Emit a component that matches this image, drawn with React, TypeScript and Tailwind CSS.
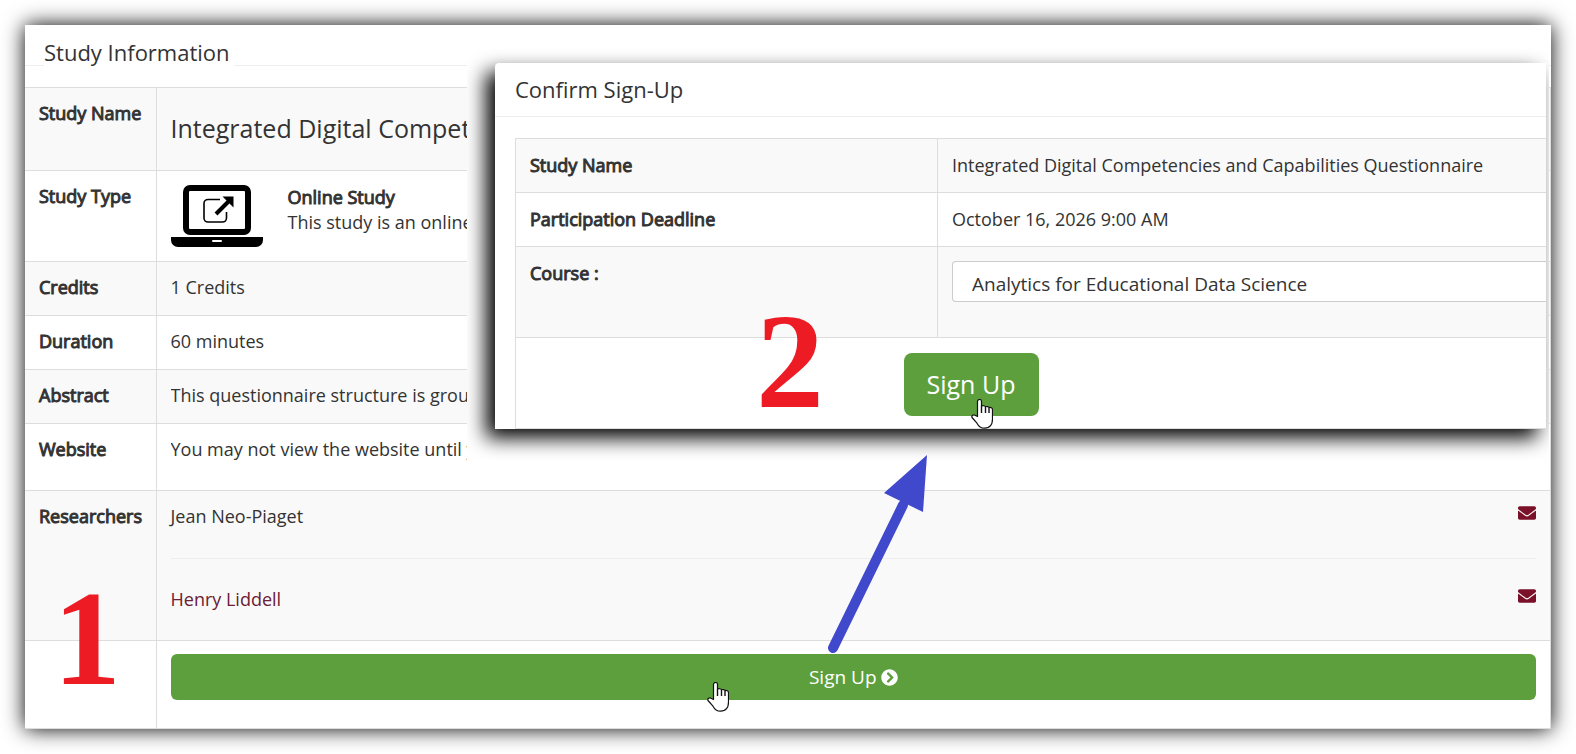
import type { ReactNode } from 'react';
import { FaEnvelope, FaChevronCircleRight } from 'react-icons/fa';

const COURSES = ['Analytics for Educational Data Science'];

const RESEARCHERS = [
  { name: 'Jean Neo-Piaget', link: false },
  { name: 'Henry Liddell', link: true },
];

function LaptopIcon() {
  return (
    <svg viewBox="0 0 92 62" className="w-[92px] h-[62px] shrink-0" aria-hidden="true">
      <rect x="15" y="3" width="62" height="44" rx="4" fill="none" stroke="#000" strokeWidth="6" />
      <path d="M0 52h92v3a7 7 0 0 1-7 7H7a7 7 0 0 1-7-7z" fill="#000" />
      <rect x="41" y="55" width="10" height="2" rx="1" fill="#fff" />
      <path d="M49 14.500H37a4 4 0 0 0-4 4V33a4 4 0 0 0 4 4h14.500a4 4 0 0 0 4-4v-6" fill="none" stroke="#000" strokeWidth="1.600" />
      <path d="M45 29L59 15" stroke="#000" strokeWidth="4" />
      <path d="M51.500 11.500H62.500V22.500z" fill="#000" />
    </svg>
  );
}

function HandCursor({ className }: { className: string }) {
  return (
    <svg viewBox="0 0 22 30" className={`absolute w-[22px] h-[30px] pointer-events-none ${className}`} aria-hidden="true">
      <path
        d="M6.500 17.500V2.500a2 2 0 0 1 4 0v4.500c1-.6 3.500-.3 4 .8 1-.6 3-.2 3.500.8 1.500-.5 3.500.3 3.500 2.200V20c0 5.500-2.500 9.200-8 9.200-4 0-6-2-7.500-5L1 18.500c-.8-2 1.500-3.200 3-2.300z"
        fill="#fff"
        stroke="#111"
        strokeWidth="1.200"
        strokeLinejoin="round"
      />
      <path d="M10.500 7v7M14.500 8v6M18 9v5" stroke="#111" strokeWidth="1.400" fill="none" />
    </svg>
  );
}

function StepNumber({ className, children }: { className: string; children: ReactNode }) {
  return (
    <span className={`absolute font-['Liberation_Serif',serif] text-[136px] leading-[136px] font-bold text-[#ed1c24] ${className}`}>{children}</span>
  );
}

function InfoRow({ label, shaded, className = '', children }: { label: string; shaded?: boolean; className?: string; children: ReactNode }) {
  return (
    <tr className={`border-t border-[#ddd] ${shaded ? 'bg-[#f9f9f9]' : 'bg-white'} ${className}`}>
      <th scope="row" className="w-[131px] px-3.5 py-[13px] text-left align-top font-normal [-webkit-text-stroke:1px] whitespace-nowrap border-r border-[#ddd]">{label}</th>
      <td className="px-3.5 py-[13px] align-top whitespace-nowrap">{children}</td>
    </tr>
  );
}

// Keeps long values inside the strip left of the confirmation panel
function Clipped({ children }: { children: ReactNode }) {
  return <div className="max-w-[296px] overflow-hidden">{children}</div>;
}

function StudyInformation() {
  return (
    <section>
      <div className="h-[41px] px-[19px] pt-3 border-b border-[#eee]">
        <h2 className="relative w-fit bg-white pr-1 text-[22px] leading-[30px]">Study Information</h2>
      </div>
      <table className="mt-[21px] w-full table-fixed border-collapse border-b border-r border-[#ddd]">
        <tbody>
          <InfoRow label="Study Name" shaded className="h-[83px]">
            <Clipped>
              <h3 className="pt-2.5 text-[25px] leading-[34px]">Integrated Digital Competencies</h3>
            </Clipped>
          </InfoRow>
          <InfoRow label="Study Type" className="h-[91px]">
            <Clipped>
              <div className="flex gap-[25px] pt-px">
                <LaptopIcon />
                <div>
                  <p className="[-webkit-text-stroke:1px]">Online Study</p>
                  <p>This study is an online</p>
                </div>
              </div>
            </Clipped>
          </InfoRow>
          <InfoRow label="Credits" shaded className="h-[54px]">1 Credits</InfoRow>
          <InfoRow label="Duration" className="h-[54px]">60 minutes</InfoRow>
          <InfoRow label="Abstract" shaded className="h-[54px]">
            <Clipped>This questionnaire structure is grounded</Clipped>
          </InfoRow>
          <InfoRow label="Website" className="h-[67px]">
            <Clipped>You may not view the website until you</Clipped>
          </InfoRow>
          <InfoRow label="Researchers" shaded className="h-[150px]">
            {RESEARCHERS.map((r, i) => (
              <div key={r.name} className={`flex justify-between ${i > 0 ? 'mt-[29px] border-t border-[#eee] pt-7' : ''}`}>
                {r.link ? <a href="#researcher" className="text-[#6b2034]">{r.name}</a> : <span>{r.name}</span>}
                <a href="#contact" aria-label={`Email ${r.name}`} className="text-[#7b1129]">
                  <FaEnvelope size={18} />
                </a>
              </div>
            ))}
          </InfoRow>
          <InfoRow label="" className="h-[88px]">
            <button className="flex h-[46px] w-full items-center justify-center gap-1 rounded-md bg-[#5d9f3d] text-[19px] text-white">
              Sign Up <FaChevronCircleRight size={17} />
            </button>
          </InfoRow>
        </tbody>
      </table>
    </section>
  );
}

function ConfirmSignUp() {
  const th = 'w-[422px] border border-[#ddd] p-3.5 text-left align-top font-normal [-webkit-text-stroke:1px]';
  const td = 'border-y border-[#ddd] p-3.5 align-top';

  return (
    <section className="relative rounded-tl-sm bg-white shadow-[-9px_9px_20px_#000]">
      <h2 className="border-b border-[#eee] px-5 pt-[11px] pb-3 text-[22px] leading-[30px]">Confirm Sign-Up</h2>
      <div className="pl-5 pt-[21px]">
        <table className="w-full table-fixed border-collapse">
          <tbody>
            <tr className="bg-[#f9f9f9]">
              <th scope="row" className={th}>Study Name</th>
              <td className={td}>Integrated Digital Competencies and Capabilities Questionnaire</td>
            </tr>
            <tr>
              <th scope="row" className={th}>Participation Deadline</th>
              <td className={td}>October 16, 2026 9:00 AM</td>
            </tr>
            <tr className="h-[91px] bg-[#f9f9f9]">
              <th scope="row" className={th}><label htmlFor="course">Course :</label></th>
              <td className="border-y border-[#ddd] py-3.5 pl-3.5 align-top">
                <select id="course" className="block h-[41px] w-full appearance-none rounded-l border border-r-0 border-[#ccc] bg-white pl-[19px] pt-1.5 text-[19px]">
                  {COURSES.map(c => <option key={c}>{c}</option>)}
                </select>
              </td>
            </tr>
            <tr>
              <td colSpan={2} className="border border-r-0 border-[#ddd] pt-[15px] pb-3 pr-[120px] text-center align-top">
                <span className="relative inline-block align-top">
                  <button className="block h-[63px] w-[135px] rounded-lg bg-[#5d9f3d] text-[25px] text-white">Sign Up</button>
                  <HandCursor className="left-[67px] top-[46px]" />
                </span>
              </td>
            </tr>
          </tbody>
        </table>
      </div>
      <StepNumber className="left-[261px] top-[230px]">2</StepNumber>
    </section>
  );
}

export default function App() {
  return (
    <main className="min-h-screen bg-white p-[25px] font-['Open_Sans',sans-serif] text-[18px] leading-[25px] text-[#333]">
      <div className="relative bg-white shadow-[0_0_20px_#000]">
        <StudyInformation />

        {/* Confirmation step, laid over the study page */}
        <div className="absolute left-[442px] right-0.5 top-[5px] overflow-hidden bg-white pl-7 pr-[3px] pt-[33px] pb-[31px]">
          <ConfirmSignUp />
        </div>

        <StepNumber className="left-[28px] top-[545px]">1</StepNumber>
        <HandCursor className="left-[682px] top-[657px]" />

        <svg viewBox="0 0 102 200" className="absolute left-[802px] top-[430px] h-[200px] w-[102px] pointer-events-none" aria-hidden="true">
          <path d="M6 193L76 50" stroke="#4048cc" strokeWidth="10" strokeLinecap="round" />
          <path d="M100 0L57 38L96 57z" fill="#4048cc" />
        </svg>
      </div>
    </main>
  );
}
